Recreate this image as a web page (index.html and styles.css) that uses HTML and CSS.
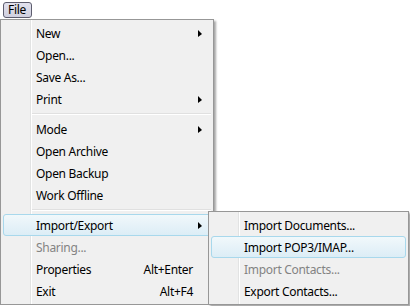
FILE: index.html
```html
<!DOCTYPE html>
<html lang="en">
<head>
  <meta charset="UTF-8">
  <title>File Menu</title>
  <link rel="stylesheet" href="styles.css">
</head>
<body>

  <!-- Menu bar -->
  <div class="menubar">
    <span class="menubar-item active">File</span>
  </div>

  <!-- File menu -->
  <div class="menu main-menu">
    <div class="menu-item"><span class="label">New</span><span class="arrow"></span></div>
    <div class="menu-item"><span class="label">Open...</span></div>
    <div class="menu-item"><span class="label">Save As...</span></div>
    <div class="menu-item"><span class="label">Print</span><span class="arrow"></span></div>
    <div class="separator"></div>
    <div class="menu-item"><span class="label">Mode</span><span class="arrow"></span></div>
    <div class="menu-item"><span class="label">Open Archive</span></div>
    <div class="menu-item"><span class="label">Open Backup</span></div>
    <div class="menu-item"><span class="label">Work Offline</span></div>
    <div class="separator"></div>
    <div class="menu-item hover"><span class="label">Import/Export</span><span class="arrow"></span></div>
    <div class="menu-item disabled"><span class="label">Sharing...</span></div>
    <div class="menu-item"><span class="label">Properties</span><span class="shortcut">Alt+Enter</span></div>
    <div class="menu-item"><span class="label">Exit</span><span class="shortcut">Alt+F4</span></div>
  </div>

  <!-- Import/Export submenu -->
  <div class="menu submenu">
    <div class="menu-item"><span class="label">Import Documents...</span></div>
    <div class="menu-item hover"><span class="label">Import POP3/IMAP...</span></div>
    <div class="menu-item disabled"><span class="label">Import Contacts...</span></div>
    <div class="menu-item"><span class="label">Export Contacts...</span></div>
  </div>

</body>
</html>
```

FILE: styles.css
```css
* {
  margin: 0;
  padding: 0;
  box-sizing: border-box;
}

body {
  font-family: "Noto Sans", "Open Sans", sans-serif;
  font-size: 12px;
  letter-spacing: -0.3px;
  color: #000;
  background: #fff;
  overflow: hidden;
}

/* Menu bar */
.menubar {
  height: 19px;
  padding: 2px 0 0 3px;
  display: flex;
}

.menubar-item {
  height: 16px;
  padding: 0 5px 0 4px;
  line-height: 14px;
  border: 1px solid transparent;
  border-radius: 3px;
}

.menubar-item.active {
  border-color: #5d5d6e;
  background: linear-gradient(#e2e2ee, #d0d0df);
}

/* Menus */
.menu {
  border: 1px solid #979797;
  padding: 2px;
  background: linear-gradient(to right,
    #f0f0f0 0, #f0f0f0 29px,
    #e2e3e3 29px, #e2e3e3 30px,
    #fff 30px, #fff 31px,
    #f0f0f0 31px);
  box-shadow: 2px 2px 2px rgba(0, 0, 0, 0.35);
}

.main-menu {
  width: 214px;
}

.submenu {
  position: absolute;
  left: 208px;
  top: 211px;
  width: 201px;
}

.menu-item {
  position: relative;
  height: 22px;
  display: flex;
  align-items: center;
  padding: 0 17px 0 32px;
  border: 1px solid transparent;
  border-radius: 3px;
  white-space: nowrap;
}

.menu-item .label {
  flex: 1;
}

.menu-item.hover {
  border-color: #a8d8ec;
  background: linear-gradient(#f1f8fb, #dcedf6);
}

.menu-item.disabled {
  color: #838383;
}

.arrow {
  position: absolute;
  right: 8px;
  top: 7px;
  width: 0;
  height: 0;
  border-left: 4px solid #000;
  border-top: 4px solid transparent;
  border-bottom: 3px solid transparent;
}

.separator {
  height: 8px;
  margin-left: 29px;
  background: linear-gradient(#f0f0f0 3px, #e0e0e0 3px, #e0e0e0 4px, #fff 4px, #fff 5px, #f0f0f0 5px);
}
```
